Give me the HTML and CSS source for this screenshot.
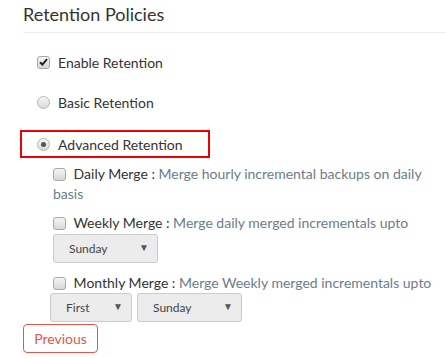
FILE: index.html
```html
<!DOCTYPE html>
<html lang="en">
<head>
  <meta charset="UTF-8" />
  <title>Retention Policies</title>
  <link rel="stylesheet" href="styles.css">
</head>
<body>
  <div class="page">
    <h1>Retention Policies</h1>

    <div class="options">
      <label class="row first">
        <span class="box checked">
          <svg width="9" height="8" viewBox="0 0 9 8"><path d="M1 4.2 L3.4 6.6 L8 1.2" fill="none" stroke="#222" stroke-width="2"/></svg>
        </span>
        Enable Retention
      </label>

      <label class="row">
        <span class="radio"></span>
        Basic Retention
      </label>

      <div class="highlight">
        <label class="row">
          <span class="radio on"><span class="dot"></span></span>
          Advanced Retention
        </label>
      </div>

      <div class="merges">
        <p class="merge">
          <span class="box small"></span>
          <span class="name">Daily Merge :</span> Merge hourly incremental backups on daily basis
        </p>

        <p class="merge gap">
          <span class="box small"></span>
          <span class="name">Weekly Merge :</span> Merge daily merged incrementals upto
        </p>
        <div class="selects">
          <span class="pick wide">Sunday</span>
        </div>

        <p class="merge gap2">
          <span class="box small"></span>
          <span class="name">Monthly Merge :</span> Merge Weekly merged incrementals upto
        </p>
        <div class="selects shift">
          <span class="pick">First</span>
          <span class="pick wide">Sunday</span>
        </div>
      </div>
    </div>

    <button class="prev">Previous</button>
  </div>
</body>
</html>
```

FILE: styles.css
```css
body {
  margin: 0;
  font-family: Lato, "Open Sans", sans-serif;
  color: #333;
  background: #fff;
}
.page {
  padding-left: 23px;
}
h1 {
  margin: 0;
  font-size: 18px;
  font-weight: normal;
  line-height: 28px;
  padding-bottom: 4px;
  border-bottom: 1px solid #eee;
  color: #333;
}
.options {
  padding-left: 14px;
  padding-right: 12px;
}
.row {
  display: flex;
  align-items: center;
  gap: 8px;
  height: 20px;
  margin-top: 20px;
  font-size: 14px;
}
.row.first {
  margin-top: 19px;
}
.box {
  display: inline-flex;
  align-items: center;
  justify-content: center;
  width: 11px;
  height: 11px;
  border: 1px solid #a9a9a9;
  border-radius: 3px;
  background: linear-gradient(#f4f4f4, #d8d8d8);
  flex: none;
}
.radio {
  display: inline-flex;
  align-items: center;
  justify-content: center;
  width: 11px;
  height: 11px;
  border: 1px solid #b5b5b5;
  border-radius: 50%;
  background: linear-gradient(#f6f6f6, #d9d9d9);
  flex: none;
}
.dot {
  width: 5px;
  height: 5px;
  border-radius: 50%;
  background: #555;
}
.highlight {
  margin: 18px 0 0 -17px;
  width: 171px;
  padding: 0 0 0 15px;
  height: 24px;
  border: 2px solid #e00;
  display: flex;
  align-items: center;
}
.highlight .row {
  margin-top: 0;
}
.merges {
  padding-left: 16px;
}
.merge {
  margin: 6px 0 0;
  font-size: 14px;
  line-height: 20px;
  color: #6b7c8e;
}
.merge.gap {
  margin-top: 9px;
}
.merge.gap2 {
  margin-top: 10px;
}
.name {
  color: #333;
}
.box.small {
  vertical-align: -2px;
  margin-right: 4px;
}
.selects {
  display: flex;
  gap: 5px;
  margin-top: 1px;
}
.selects.shift {
  margin-left: -3px;
  margin-top: 0;
}
.pick {
  position: relative;
  box-sizing: border-box;
  width: 82px;
  height: 29px;
  line-height: 27px;
  padding-left: 15px;
  font-size: 12px;
  color: #444;
  background: #ececec;
  border: 1px solid #ccc;
  border-radius: 3px;
}
.pick.wide {
  width: 105px;
}
.pick::after {
  content: "\25BC";
  position: absolute;
  right: 8px;
  top: -1px;
  font-size: 10px;
  color: #555;
}
.prev {
  display: block;
  margin-top: 2px;
  box-sizing: border-box;
  width: 75px;
  height: 29px;
  padding: 0;
  font-family: Lato, sans-serif;
  font-size: 14px;
  color: #e4554d;
  background: #fff;
  border: 1px solid #e4554d;
  border-radius: 4px;
}
```
